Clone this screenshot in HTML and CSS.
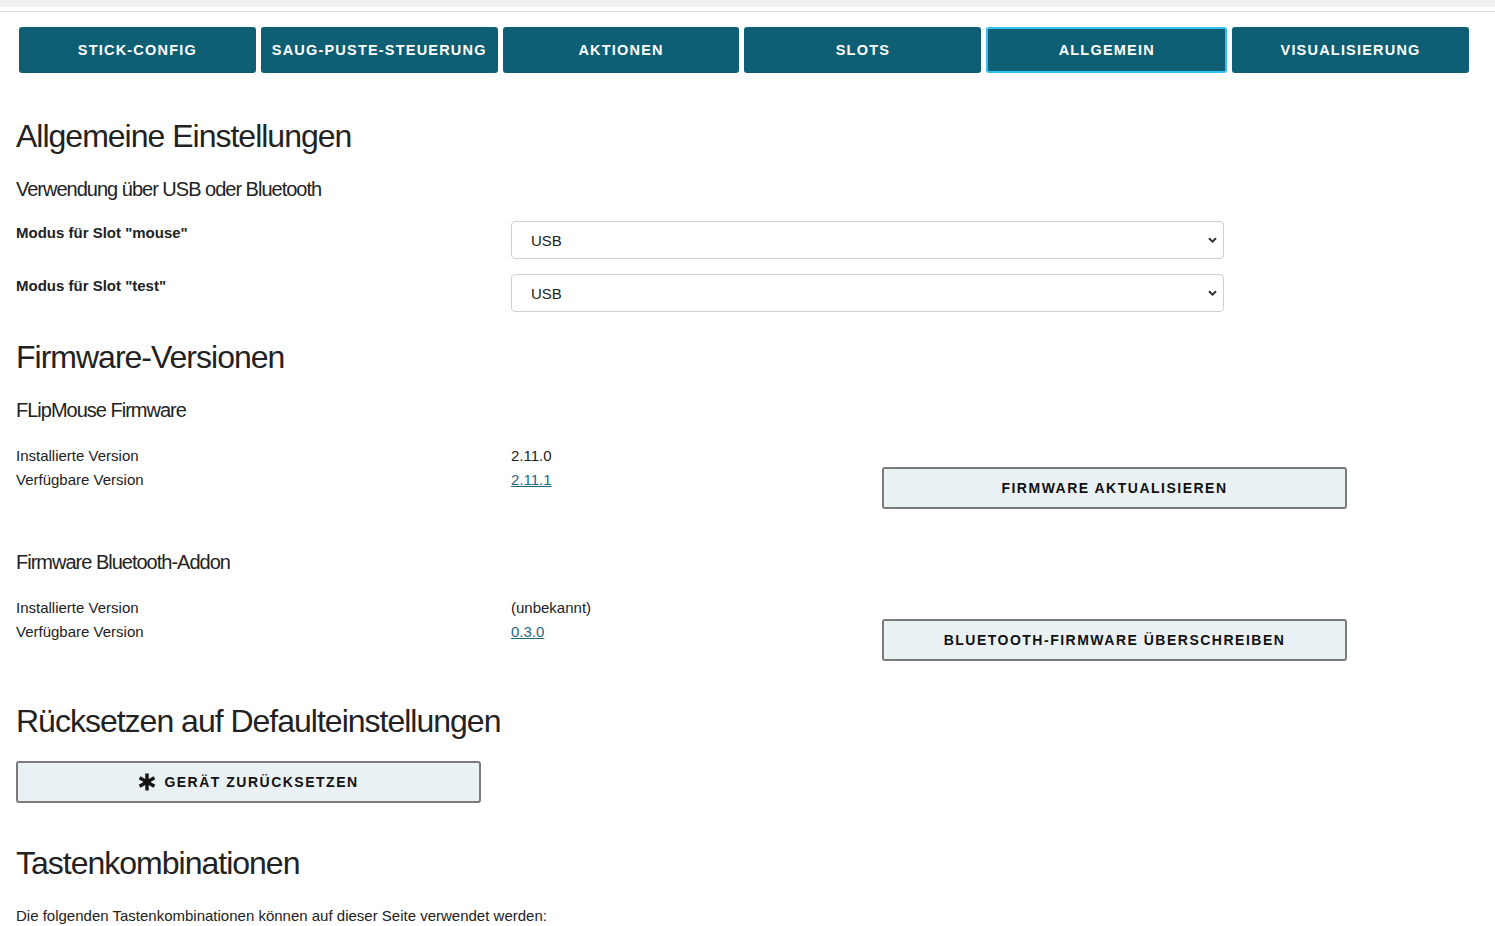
FILE: index.html
```html
<!DOCTYPE html>
<html lang="de">
<head>
<meta charset="utf-8">
<title>FLipMouse – Allgemein</title>
<link rel="stylesheet" href="styles.css">
</head>
<body>
<div class="topbar"></div>
<div class="rule"></div>
<nav class="tabs">
  <button class="tab">STICK-CONFIG</button>
  <button class="tab">SAUG-PUSTE-STEUERUNG</button>
  <button class="tab">AKTIONEN</button>
  <button class="tab">SLOTS</button>
  <button class="tab tab-active">ALLGEMEIN</button>
  <button class="tab">VISUALISIERUNG</button>
</nav>
<main class="content">
  <section class="section">
    <h2 class="h2">Allgemeine Einstellungen</h2>
    <h3 class="h3">Verwendung über USB oder Bluetooth</h3>
    <div class="form-list">
      <div class="form-row">
        <label class="form-label">Modus für Slot "mouse"</label>
        <select class="select"><option>USB</option><option>Bluetooth</option><option>USB + Bluetooth</option></select>
      </div>
      <div class="form-row">
        <label class="form-label">Modus für Slot "test"</label>
        <select class="select"><option>USB</option><option>Bluetooth</option><option>USB + Bluetooth</option></select>
      </div>
    </div>
  </section>

  <section class="section">
    <h2 class="h2">Firmware-Versionen</h2>
    <div class="subsection">
      <h3 class="h3">FLipMouse Firmware</h3>
      <div class="fw-grid">
        <div class="fw-col">
          <div>Installierte Version</div>
          <div>Verfügbare Version</div>
        </div>
        <div class="fw-col">
          <div>2.11.0</div>
          <div><a class="link" href="#">2.11.1</a></div>
        </div>
        <div class="fw-col">
          <button class="btn-light">FIRMWARE AKTUALISIEREN</button>
        </div>
      </div>
    </div>
    <div class="subsection">
      <h3 class="h3">Firmware Bluetooth-Addon</h3>
      <div class="fw-grid">
        <div class="fw-col">
          <div>Installierte Version</div>
          <div>Verfügbare Version</div>
        </div>
        <div class="fw-col">
          <div>(unbekannt)</div>
          <div><a class="link" href="#">0.3.0</a></div>
        </div>
        <div class="fw-col">
          <button class="btn-light">BLUETOOTH-FIRMWARE ÜBERSCHREIBEN</button>
        </div>
      </div>
    </div>
  </section>

  <section class="section section-reset">
    <h2 class="h2">Rücksetzen auf Defaulteinstellungen</h2>
    <button class="btn-light btn-reset">
      <svg class="icon-asterisk" viewBox="0 0 18 18" width="18" height="18" aria-hidden="true">
        <g stroke="#111" stroke-width="3.4" stroke-linecap="butt">
          <line x1="9" y1="0.5" x2="9" y2="17.5"/>
          <line x1="1.6" y1="4.75" x2="16.4" y2="13.25"/>
          <line x1="1.6" y1="13.25" x2="16.4" y2="4.75"/>
        </g>
      </svg>
      <span>GERÄT ZURÜCKSETZEN</span>
    </button>
  </section>

  <section class="section">
    <h2 class="h2">Tastenkombinationen</h2>
    <p class="text">Die folgenden Tastenkombinationen können auf dieser Seite verwendet werden:</p>
  </section>
</main>
</body>
</html>
```

FILE: styles.css
```css
html, body {
  margin: 0;
  padding: 0;
  background: #ffffff;
}

body {
  font-family: "Liberation Sans", Arial, sans-serif;
  font-size: 15px;
  line-height: 24px;
  color: #222222;
}

.topbar {
  height: 7px;
  background: #f1f2f4;
}

.rule {
  margin-top: 4px;
  height: 1px;
  background: #dcdcdc;
}

.tabs {
  display: flex;
  gap: 5px;
  padding: 15px 26px 0 19px;
}

.tab {
  flex: 1 1 0;
  box-sizing: content-box;
  height: 46px;
  padding: 0;
  margin: 0;
  border: none;
  border-radius: 3px;
  background: #0e5f74;
  color: #ffffff;
  font-family: "Liberation Sans", Arial, sans-serif;
  font-weight: 700;
  font-size: 14.5px;
  letter-spacing: 1.2px;
  white-space: nowrap;
  cursor: pointer;
}

.tab-active {
  height: 42px;
  border: 2px solid #33c2f0;
}

.content {
  padding: 44px 16px 0 16px;
}

.section {
  display: flow-root;
}

.section + .section {
  margin-top: 26px;
}

.h2 {
  margin: 0 0 22px 0;
  font-size: 32px;
  line-height: 38px;
  font-weight: 400;
  letter-spacing: -1px;
  color: #222222;
}

.section-reset .h2 {
  margin-bottom: 21px;
}

.h3 {
  margin: 0 0 20px 0;
  font-size: 20px;
  line-height: 24px;
  font-weight: 400;
  letter-spacing: -1px;
  color: #222222;
}

.h2 + .h3 {
  margin-top: 1px;
}

.form-list {
  display: flex;
  flex-direction: column;
  gap: 15px;
}

.form-row {
  display: grid;
  grid-template-columns: 495px 713px;
  align-items: start;
}

.form-label {
  font-weight: 700;
  font-size: 15px;
  line-height: 24px;
}

.select {
  box-sizing: border-box;
  height: 38px;
  width: 713px;
  margin: 0;
  padding: 0 30px 0 19px;
  border: 1px solid #cfcfcf;
  border-radius: 4px;
  background-color: #ffffff;
  background-image: url("data:image/svg+xml;utf8,<svg xmlns='http://www.w3.org/2000/svg' width='9' height='6' viewBox='0 0 9 6'><path d='M1 1.2 L4.5 4.6 L8 1.2' fill='none' stroke='%23333' stroke-width='2'/></svg>");
  background-repeat: no-repeat;
  background-position: right 6px center;
  font-family: "Liberation Sans", Arial, sans-serif;
  font-size: 15px;
  color: #222222;
  appearance: none;
  -webkit-appearance: none;
}

.subsection + .subsection {
  margin-top: 26px;
}

.fw-grid {
  display: grid;
  grid-template-columns: 495px 371px 465px;
  align-items: start;
  margin-top: 22px;
}

.fw-col {
  display: flex;
  flex-direction: column;
}

.fw-col .btn-light {
  margin-top: 23px;
}

.link {
  color: #1f6784;
  text-decoration: underline;
}

.btn-light {
  box-sizing: border-box;
  width: 465px;
  height: 42px;
  margin: 0 0 15px 0;
  padding: 0;
  border: 2px solid #7b7b7b;
  border-radius: 3px;
  background: #eaf1f5;
  color: #111111;
  font-family: "Liberation Sans", Arial, sans-serif;
  font-weight: 700;
  font-size: 14px;
  letter-spacing: 1.5px;
  cursor: pointer;
}

.btn-reset {
  display: flex;
  align-items: center;
  justify-content: center;
  gap: 8px;
}

.icon-asterisk {
  display: block;
  flex: none;
}

.text {
  margin: 0;
  font-size: 15px;
  line-height: 24px;
}
```
